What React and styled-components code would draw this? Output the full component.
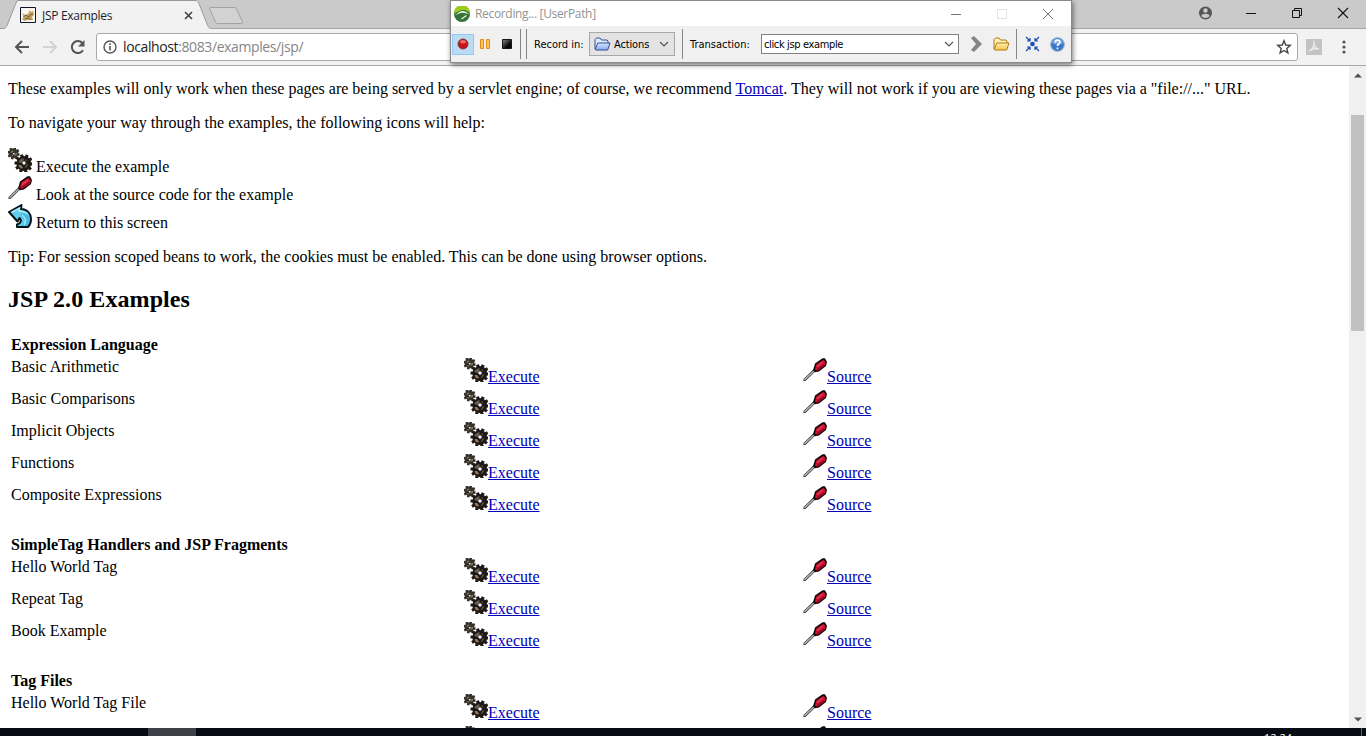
import React from "react";
import styled, { createGlobalStyle } from "styled-components";

const GlobalStyle = createGlobalStyle`
  * { box-sizing: border-box; }
  html, body, #root { margin: 0; height: 736px; overflow: hidden; }
`;

const Screen = styled.div`
  position: relative;
  display: flex;
  flex-direction: column;
  width: 1366px;
  height: 736px;
  background: #fff;
  overflow: hidden;
  svg { display: block; flex: none; }
`;

/* ---------- browser frame ---------- */
const TabStrip = styled.header`
  display: flex;
  height: 29px;
  background: #cacaca;
  box-shadow: inset 0 -1px #a5a5a5;
  font-family: "Open Sans", "Noto Sans", sans-serif;
`;
const Tab = styled.div`
  position: relative;
  display: flex;
  align-items: center;
  width: 211px;
  height: 29px;
  padding: 1px 0 0 20px;
`;
const TabShape = styled.svg`
  position: absolute;
  left: 0;
  top: 0;
`;
const TabTitle = styled.span`
  position: relative;
  width: 142px;
  margin-left: 6px;
  font-size: 12px;
  letter-spacing: -0.3px;
  color: #1c1c30;
  white-space: nowrap;
`;
const Layered = styled.div`
  position: relative;
`;
const WindowButtons = styled.div`
  display: flex;
  align-items: center;
  gap: 32px;
  height: 26px;
  margin-left: auto;
  padding-right: 17px;
`;
const Toolbar = styled.div`
  display: flex;
  align-items: center;
  height: 37px;
  padding: 0 13px;
  background: #f2f2f2;
  border-bottom: 1px solid #a9a9a9;
`;
const NavIcons = styled.div`
  display: flex;
  width: 83px;
  gap: 10px;
`;
const AddressBar = styled.div`
  display: flex;
  align-items: center;
  width: 1202px;
  height: 28px;
  padding: 0 5px 0 6px;
  background: #fff;
  border: 1px solid #a9a9a9;
  border-radius: 3px;
`;
const Url = styled.span`
  flex: 1;
  margin-left: 6px;
  font: 14px/20px "Open Sans", "Noto Sans", sans-serif;
  letter-spacing: -0.39px;
  color: #222;
`;
const UrlPath = styled.span`
  color: #858585;
`;
const Extensions = styled.div`
  display: flex;
  align-items: center;
  gap: 20px;
  margin-left: 8px;
`;

/* ---------- page ---------- */
const Viewport = styled.div`
  display: flex;
  height: 662px;
  overflow: hidden;
`;
const Page = styled.main`
  width: 1349px;
  padding: 14px 8px 0;
  font: 16px/18px "Liberation Serif", "Times New Roman", serif;
  color: #000;
`;
const Paragraph = styled.p`
  margin: 0 0 16px;
  white-space: nowrap;
`;
const Legend = styled.div`
  margin-bottom: 16px;
`;
const LegendLine = styled.div`
  display: flex;
  align-items: flex-start;
  gap: 4px;
  height: 28px;
`;
const LegendText = styled.span`
  padding-top: 10px;
`;
const Heading = styled.h2`
  margin: 0 0 22px;
  padding-top: 2px;
  font-size: 24px;
  line-height: 30px;
  letter-spacing: 0.08px;
`;
const Group = styled.section`
  padding-left: 3px;
  margin-bottom: 18px;
`;
const GroupTitle = styled.h3`
  height: 22px;
  margin: 0;
  font-size: 16px;
  line-height: 18px;
`;
const ExampleRow = styled.div`
  display: grid;
  grid-template-columns: 453px 339px 1fr;
  height: 32px;
`;
const Action = styled.div`
  display: flex;
  align-items: flex-start;
`;
const Link = styled.a`
  color: #0000b8;
  text-decoration: underline;
`;
const ActionLink = styled(Link)`
  padding-top: 10px;
`;
const ScrollBar = styled.div`
  display: flex;
  flex-direction: column;
  align-items: center;
  width: 17px;
  background: #f0f0f0;
`;
const Thumb = styled.div`
  width: 13px;
  height: 216px;
  margin: 37px 0 auto;
  background: #c1c1c1;
`;
const ScrollArrow = styled.svg`
  margin: ${(p) => p.$margin};
`;
const Taskbar = styled.footer`
  display: flex;
  height: 8px;
  padding-left: 148px;
  background: #070b14;
  overflow: hidden;
`;
const ActiveTask = styled.div`
  width: 48px;
  background: #3d4046;
`;
const Clock = styled.span`
  margin-left: 1068px;
  padding-top: 4px;
  font: 11px/12px "Open Sans", sans-serif;
  color: #fff;
`;
const DesktopEdge = styled.div`
  width: 1px;
  height: 8px;
  margin: 0 4px 0 auto;
  background: #60646b;
`;

/* ---------- recorder window ---------- */
const Recorder = styled.div`
  position: absolute;
  left: 450px;
  top: 0;
  width: 622px;
  height: 63px;
  background: #f0f0f0;
  border: 1px solid #898989;
  box-shadow: 1px 2px 5px rgba(0, 0, 0, 0.5);
`;
const RecorderTitle = styled.div`
  display: flex;
  align-items: center;
  height: 25px;
  padding: 0 17px 0 3px;
  background: #fff;
  font: 12px/16px "Open Sans", "Noto Sans", sans-serif;
  letter-spacing: -0.33px;
  color: #929292;
`;
const TitleText = styled.span`
  flex: 1;
  margin-left: 5px;
`;
const TitleButtons = styled.div`
  display: flex;
  gap: 34px;
`;
const RecorderTools = styled.div`
  display: flex;
  align-items: center;
  height: 36px;
  font: 11px/14px "DejaVu Sans Condensed", "DejaVu Sans", sans-serif;
  font-stretch: condensed;
  letter-spacing: -0.13px;
  color: #000;
`;
const ToolButton = styled.div`
  display: flex;
  align-items: center;
  justify-content: center;
  width: 22px;
  height: 21px;
  background: ${(p) => (p.$active ? "#bcdcf4" : "transparent")};
  border: 1px solid ${(p) => (p.$active ? "#90c8f6" : "transparent")};
`;
const Divider = styled.div`
  width: 1px;
  height: 30px;
  margin: ${(p) => p.$margin};
  background: #858585;
`;
const ToolLabel = styled.span`
  width: ${(p) => p.$width};
  padding-top: 1px;
  letter-spacing: 0;
  white-space: nowrap;
`;
const ActionSelect = styled.div`
  display: flex;
  align-items: center;
  width: 86px;
  height: 24px;
  padding: 0 5px 0 4px;
  background: #e3e3e3;
  border: 1px solid #a8a8a8;
`;
const SelectText = styled.span`
  flex: 1;
  margin-left: 3px;
  padding-top: 1px;
  white-space: nowrap;
`;
const TransactionBox = styled.div`
  display: flex;
  align-items: center;
  width: 198px;
  height: 20px;
  padding: 0 4px 0 2px;
  background: #fff;
  border: 1px solid #828282;
`;
const BoxText = styled.span`
  flex: 1;
  padding-top: 1px;
  letter-spacing: -0.36px;
`;
const RecorderExtras = styled.div`
  display: flex;
  align-items: center;
  gap: ${(p) => p.$gap};
  margin-left: ${(p) => p.$left};
`;

/* ---------- drawings ---------- */
const gearPoints = (cx, cy, outer, inner, teeth, turn) => {
  const pts = [];
  for (let i = 0; i < teeth; i++) {
    [[-0.34, inner], [-0.26, outer], [0.26, outer], [0.34, inner]].forEach(([o, r]) => {
      const a = ((i + o + turn) / teeth) * Math.PI * 2;
      pts.push(`${(cx + r * Math.cos(a)).toFixed(2)},${(cy + r * Math.sin(a)).toFixed(2)}`);
    });
  }
  return pts.join(" ");
};
const bigGear = gearPoints(15.8, 15.5, 9.4, 7.4, 10, 0.1);
const smallGear = gearPoints(5.5, 5.3, 6.3, 4.9, 8, 0.3);

const Gears = () => (
  <svg width="24" height="24" viewBox="0 0 24 24">
    <polygon points={smallGear} fill="#38322c" />
    <path d="M3 4.500 5 3M3.500 8 5 7.500M7.500 7.500 8.500 5" stroke="#8b7f6c" strokeWidth="1.300" />
    <path d="M5.200 5h1.400v1.400H5.200z" fill="#fff" />
    <polygon points={bigGear} fill="#1e1915" />
    <path d="M10.500 14c.8-2.500 3-4 5.500-3.500l-1 3-2 1.500z" fill="#6c6054" />
    <path d="m17.500 11 2 1.500-2 1.500zM18.500 16l2 .5-2 3-2 .5z" fill="#544a3f" />
    <path d="M10.500 17h2.500l2 2.500-1 1c-2 0-3-1.500-3.500-3.500z" fill="#8d7a60" />
    <path d="M16 13.300v3.400M14.300 15h3.400" stroke="#fff" strokeWidth="1.400" />
  </svg>
);
const Screwdriver = () => (
  <svg width="24" height="24" viewBox="0 0 24 24">
    <path d="M.5 23v-2L11 10.800l2 2L2.500 23z" fill="#3f4343" />
    <path d="m1.500 21.700 10-9.200" stroke="#b0bab8" strokeWidth="1.300" />
    <path d="M10 12.500 12 5.500 19.500.3H22l2 3.700-1 4-7 5.500-4 .8z" fill="#160609" />
    <path d="m12 11 1.500-4.700L20.500 1.800l2.200 2.700-.8 3-6.400 4.800-2.700.3z" fill="#c5112e" />
    <path d="m13.800 8.800 6.200-4.500" stroke="#f0405f" strokeWidth="1.300" />
    <path d="m14.800 11.300 6.500-4.800" stroke="#85091f" strokeWidth="1.200" />
  </svg>
);
const ReturnArrow = () => (
  <svg width="24" height="24" viewBox="0 0 24 24">
    <path d="M1 8 13.500 1 13 5c6.500.5 10 4.500 10 10 0 3.500-1 6-3 8H9v-2.500c4-1 5-4.500 2.500-6.500L9.500 17.500z" fill="#61cdec" stroke="#06141a" strokeWidth="2" strokeLinejoin="round" />
    <path d="m3.500 8.300 8-4.300-.5 3c5 0 8 2 9 6" fill="none" stroke="#b5efff" strokeWidth="1.400" />
    <path d="M12 11c6 4 5 8 1 11h6c3-4 3-8 1-11-1-1-3-2-5-2z" fill="#46b9e0" />
    <path d="M14 11c4 3 4 7 2 10.500" fill="none" stroke="#9ae6fa" strokeWidth="1.500" />
  </svg>
);
const TomcatIcon = () => (
  <Layered as="svg" width="16" height="16" viewBox="0 0 16 16">
    <path d="M.5.5h15v15H.5z" fill="#f8f6ee" stroke="#11122c" />
    <path d="m2 6 3 2 3-1 2-4 1 2 2-1 1 3-2 3 1 3H8l-4 1-2-2 2-2z" fill="#c5a361" />
    <path d="m3 10 3-2 3 2 2-3 2 1M5 12l3-1 3 2" stroke="#665334" fill="none" strokeWidth=".8" />
  </Layered>
);
const Folder = ({ fill, light, stroke, id }) => (
  <svg width="17" height="14" viewBox="0 0 17 14">
    <defs>
      <linearGradient id={id} x1="0" y1="0" x2="0" y2="1">
        <stop stopColor={light} />
        <stop offset="1" stopColor={fill} />
      </linearGradient>
    </defs>
    <path d="M1 12V2.500L2.500 1H6l1.500 2H13l1 1v3" fill={light} stroke={stroke} strokeLinejoin="round" />
    <path d="m1.200 12.500 2.500-6.500h12.300l-2.300 7H2z" fill={`url(#${id})`} stroke={stroke} strokeLinejoin="round" />
  </svg>
);
const Chevron = () => (
  <svg width="10" height="6" viewBox="0 0 10 6">
    <path d="m1 1 4 4 4-4" fill="none" stroke="#505050" strokeWidth="1.100" />
  </svg>
);

const sections = [
  ["Expression Language", ["Basic Arithmetic", "Basic Comparisons", "Implicit Objects", "Functions", "Composite Expressions"]],
  ["SimpleTag Handlers and JSP Fragments", ["Hello World Tag", "Repeat Tag", "Book Example"]],
  ["Tag Files", ["Hello World Tag File"]],
];

const Browser = () => (
  <>
    <TabStrip>
      <Tab>
        <TabShape width="246" height="29" viewBox="0 0 246 29">
          <path d="M0 29v-.5h3c2 0 3-1 4-3L16 3c.7-1.700 1.500-2.500 3-2.500h176c2 0 3 .8 3.700 2.500l9 22.500c.8 2 2 3 4 3V29z" fill="#f2f2f2" />
          <path d="M0 28.500h3c2 0 3-1 4-3L16 3c.7-1.700 1.500-2.500 3-2.500h176c2 0 3 .8 3.700 2.500l9 22.500c.8 2 2 3 4 3" fill="none" stroke="#999" />
          <path d="M211 7.500h23c1.500 0 2 .5 2.500 1.500l6 13c.5 1 0 1.500-1 1.500h-24c-1 0-1.500-.5-2-1.500l-6-13c-.4-1 0-1.500 1.500-1.500z" fill="#d2d2d2" stroke="#a2a2a2" />
        </TabShape>
        <TomcatIcon />
        <TabTitle>JSP Examples</TabTitle>
        <Layered as="svg" width="9" height="9" viewBox="0 0 9 9">
          <path d="m1 1 7 7M8 1 1 8" stroke="#434343" strokeWidth="1.600" />
        </Layered>
      </Tab>
      <WindowButtons>
        <svg width="14" height="14" viewBox="0 0 14 14">
          <circle cx="6.500" cy="7" r="6.500" fill="#555" />
          <circle cx="6.500" cy="4.500" r="2.200" fill="#cacaca" />
          <path d="M2.300 10c1-3 7.400-3 8.400 0-2 2.500-6.400 2.500-8.400 0z" fill="#cacaca" />
        </svg>
        <svg width="14" height="12" viewBox="0 0 14 12"><path d="M1 6.500h10" stroke="#111" /></svg>
        <svg width="14" height="12" viewBox="0 0 14 12">
          <path d="M1.500 3.500h7v7h-7zM3.500 3V1.500h7v7H9" fill="none" stroke="#111" />
        </svg>
        <svg width="12" height="12" viewBox="0 0 12 12"><path d="m1 1 10 10M11 1 1 11" stroke="#111" strokeWidth="1.100" /></svg>
      </WindowButtons>
    </TabStrip>
    <Toolbar>
      <NavIcons>
        <svg width="18" height="16" viewBox="0 0 18 16"><path d="M16 8H3m6-6L3 8l6 6" fill="none" stroke="#555" strokeWidth="2" /></svg>
        <svg width="18" height="16" viewBox="0 0 18 16"><path d="M2 8h13M9 2l6 6-6 6" fill="none" stroke="#d2d2d2" strokeWidth="2" /></svg>
        <svg width="18" height="16" viewBox="0 0 18 16">
          <path d="M14 11.200A6 6 0 1 1 13.300 4" fill="none" stroke="#555" strokeWidth="2" />
          <path d="M15.500 1v6.500H9z" fill="#555" />
        </svg>
      </NavIcons>
      <AddressBar>
        <svg width="14" height="14" viewBox="0 0 14 14">
          <circle cx="7" cy="7" r="6" fill="none" stroke="#555" strokeWidth="1.400" />
          <path d="M7 6v4.500M7 3.300v1.600" stroke="#555" strokeWidth="1.600" />
        </svg>
        <Url>localhost<UrlPath>:8083/examples/jsp/</UrlPath></Url>
        <svg width="16" height="16" viewBox="0 0 16 16">
          <path d="m8 1.700 1.700 4.300 4.600.4-3.500 3 1.100 4.500L8 11.500 4.100 13.900l1.100-4.500-3.500-3L6.300 6z" fill="none" stroke="#484848" strokeWidth="1.400" />
        </svg>
      </AddressBar>
      <Extensions>
        <svg width="16" height="16" viewBox="0 0 16 16">
          <path d="M0 0h16v16H0z" fill="#c3c3c3" />
          <path d="M3 12c4-2 6-6 5-9-.8 4 2 7 5 7-4-1-7 0-10 2z" fill="none" stroke="#f1f1f1" strokeWidth="1.200" />
        </svg>
        <svg width="4" height="14" viewBox="0 0 4 14">
          <circle cx="2" cy="2" r="1.600" fill="#555" /><circle cx="2" cy="7" r="1.600" fill="#555" /><circle cx="2" cy="12" r="1.600" fill="#555" />
        </svg>
      </Extensions>
    </Toolbar>
  </>
);

const RecorderWindow = () => (
  <Recorder>
    <RecorderTitle>
      <svg width="16" height="16" viewBox="0 0 16 16">
        <circle cx="8" cy="8" r="8" fill="#347438" />
        <path d="M0 7a8 8 0 0 1 16 0c-2-1-3-3-7-3-4 0-5 3-9 3z" fill="#9bcc19" />
        <path d="M.3 8.500C4 8.500 5 5 8.500 5s4.500 2.500 7.200 3c-3 .3-4.200-1.200-7-1.200-3.200 0-4 2-8.400 1.700z" fill="#eef6e4" />
        <path d="m7.500 13 5-3.500" stroke="#e8f1d7" strokeWidth="1.300" />
      </svg>
      <TitleText>Recording... [UserPath]</TitleText>
      <TitleButtons>
        <svg width="12" height="12" viewBox="0 0 12 12"><path d="M1 6.500h10" stroke="#777" /></svg>
        <svg width="12" height="12" viewBox="0 0 12 12"><path d="M1.500 1.500h9v9h-9z" fill="none" stroke="#e3e3e3" /></svg>
        <svg width="12" height="12" viewBox="0 0 12 12"><path d="m1 1 10 10M11 1 1 11" stroke="#777" /></svg>
      </TitleButtons>
    </RecorderTitle>
    <RecorderTools>
      <RecorderExtras $gap="0" $left="1px">
        <ToolButton $active>
          <svg width="12" height="12" viewBox="0 0 12 12">
            <circle cx="6" cy="6" r="5" fill="#c4161c" stroke="#8d3940" /><ellipse cx="6" cy="3.700" rx="3" ry="1.700" fill="#e76a65" />
          </svg>
        </ToolButton>
        <ToolButton>
          <svg width="12" height="12" viewBox="0 0 12 12"><path d="M1.500 1.500h3v9h-3zM7.500 1.500h3v9h-3z" fill="#ffc653" stroke="#e28b18" /></svg>
        </ToolButton>
        <ToolButton>
          <svg width="10" height="10" viewBox="0 0 10 10">
            <defs><linearGradient id="stop" x2="1" y2="1"><stop stopColor="#8b8b8b" /><stop offset=".65" stopColor="#080808" /></linearGradient></defs>
            <path d="M.5.5h9v9h-9z" fill="url(#stop)" stroke="#171717" />
          </svg>
        </ToolButton>
      </RecorderExtras>
      <Divider $margin="0 5px 0 2px" />
      <Divider $margin="0 7px 0 0" />
      <ToolLabel $width="55px">Record in:</ToolLabel>
      <ActionSelect>
        <Folder id="actions" fill="#82a9ec" light="#dceaff" stroke="#344f91" />
        <SelectText>Actions</SelectText>
        <Chevron />
      </ActionSelect>
      <Divider $margin="0 7px 0 7px" />
      <ToolLabel $width="71px">Transaction:</ToolLabel>
      <TransactionBox>
        <BoxText>click jsp example</BoxText>
        <Chevron />
      </TransactionBox>
      <RecorderExtras $gap="11px" $left="12px">
        <svg width="11" height="16" viewBox="0 0 11 16"><path d="m0 2 3-2 8 8-8 8-3-2 5-6z" fill="#858585" /></svg>
        <Folder id="open" fill="#f1c34f" light="#fff1ad" stroke="#ae7818" />
      </RecorderExtras>
      <Divider $margin="0 8px 0 6px" />
      <RecorderExtras $gap="10px" $left="0">
        <svg width="15" height="16" viewBox="0 0 15 16">
          <circle cx="7.500" cy="8" r="2.300" fill="#174eb0" />
          <path d="m1 1 4 4m0-3v3H2M14 1l-4 4m0-3v3h3M1 15l4-4m0 3v-3H2m12 4-4-4m0 3v-3h3" fill="none" stroke="#174eb0" strokeWidth="1.200" />
        </svg>
        <svg width="15" height="15" viewBox="0 0 15 15">
          <circle cx="7.500" cy="7.500" r="6.900" fill="#3978c8" stroke="#a6b9d4" />
          <path d="M2 6c1-6 10-6 11 0-4 2-7 2-11 0z" fill="#79a7df" />
          <path d="M5.300 5.500c0-3 4.500-3 4.500-.3C9.800 7 7.500 7 7.500 9M7.500 10.500v1.700" fill="none" stroke="#fff" strokeWidth="1.700" />
        </svg>
      </RecorderExtras>
    </RecorderTools>
  </Recorder>
);

export default function App() {
  return (
    <Screen>
      <GlobalStyle />
      <Browser />
      <Viewport>
        <Page>
          <Paragraph>
            These examples will only work when these pages are being served by a servlet engine; of course, we recommend <Link>Tomcat</Link>. They will not work if you are viewing these pages via a "file://..." URL.
          </Paragraph>
          <Paragraph>To navigate your way through the examples, the following icons will help:</Paragraph>
          <Legend>
            <LegendLine><Gears /><LegendText>Execute the example</LegendText></LegendLine>
            <LegendLine><Screwdriver /><LegendText>Look at the source code for the example</LegendText></LegendLine>
            <LegendLine><ReturnArrow /><LegendText>Return to this screen</LegendText></LegendLine>
          </Legend>
          <Paragraph>Tip: For session scoped beans to work, the cookies must be enabled. This can be done using browser options.</Paragraph>
          <Heading>JSP 2.0 Examples</Heading>
          {sections.map(([title, rows]) => (
            <Group key={title}>
              <GroupTitle>{title}</GroupTitle>
              {rows.map((name) => (
                <ExampleRow key={name}>
                  <span>{name}</span>
                  <Action><Gears /><ActionLink>Execute</ActionLink></Action>
                  <Action><Screwdriver /><ActionLink>Source</ActionLink></Action>
                </ExampleRow>
              ))}
              {title === "Tag Files" && (
                <ExampleRow>
                  <span />
                  <Action><Gears /></Action>
                  <Action><Screwdriver /></Action>
                </ExampleRow>
              )}
            </Group>
          ))}
        </Page>
        <ScrollBar>
          <ScrollArrow $margin="7px 0 0" width="8" height="5" viewBox="0 0 8 5"><path d="m0 4.500 4-4 4 4z" fill="#505050" /></ScrollArrow>
          <Thumb />
          <ScrollArrow $margin="0 0 6px" width="8" height="5" viewBox="0 0 8 5"><path d="m0 .5 4 4 4-4z" fill="#505050" /></ScrollArrow>
        </ScrollBar>
      </Viewport>
      <Taskbar>
        <ActiveTask />
        <Clock>12:24</Clock>
        <DesktopEdge />
      </Taskbar>
      <RecorderWindow />
    </Screen>
  );
}
